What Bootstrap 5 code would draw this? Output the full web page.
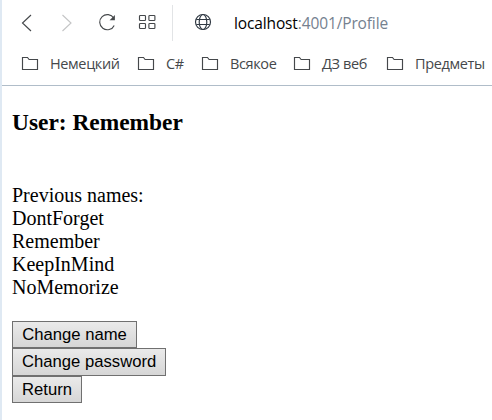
<!DOCTYPE html>
<html lang="ru">
<head>
<meta charset="utf-8">
<title>Profile</title>
<link href="https://cdn.jsdelivr.net/npm/bootstrap@5.3.0/dist/css/bootstrap.min.css" rel="stylesheet">
<style>
body{height:420px;overflow:hidden;border-left:2px solid #dfe9f3;background:#fff;color:#000;font-family:"Liberation Serif",serif;font-size:20px;line-height:23px}
svg{display:block;flex:none;overflow:visible!important;fill:none;stroke:#45484b;stroke-width:1.15}
.toolbar{height:45px;padding-left:18px;font-family:"Open Sans","Noto Sans",sans-serif}
.tool{width:40px;height:45px}
.tool-grid{width:22px}
.tool-off{stroke:#c4c5c6}
.divider{width:1px;height:36px;margin:5px 19px 0 10px;background:#e2e4e6}
.address{font-size:15.5px;line-height:22px;margin:12px 0 0 18px;white-space:nowrap;letter-spacing:-.13px}
.address span{color:#75818f}
.bookmarks{height:41px;padding-left:20px;border-bottom:1px solid #b0bdc9;font-family:"Open Sans","Noto Sans",sans-serif;font-size:14.5px;line-height:20px;color:#45484b}
.bookmark{flex:none;white-space:nowrap;padding-top:9px;gap:12px}
.bookmark svg{margin-top:2px}
.bookmark span{letter-spacing:-.37px}
.b1{width:116px}.b2{width:64px}.b3{width:92px}.b4{width:93px}
.page{padding:23px 10px 0}
.page h3{font-size:23.4px;line-height:27px;font-weight:700;margin:0 0 48px}
.names{margin-bottom:22px}
.action{display:block;height:27px;padding:0 9px;border:1px solid #707070;border-radius:0;background:linear-gradient(#eaeaea,#d6d6d6);color:#000;font-family:"Liberation Sans",Arial,sans-serif;font-size:16.67px;line-height:25px;white-space:nowrap}
.w1{width:125px}.w2{width:154px;height:28px;padding-bottom:2px}.w3{width:70px}
</style>
<script src="https://cdn.jsdelivr.net/npm/bootstrap@5.3.0/dist/js/bootstrap.bundle.min.js"></script>
</head>
<body>
<header>
<nav class="toolbar d-flex align-items-start">
<svg class="tool" viewBox="20 0 40 45"><path d="M31 15l-8.5 8 8.5 8"/></svg>
<svg class="tool tool-off" viewBox="60 0 40 45"><path d="M62.5 15l8.5 8-8.5 8"/></svg>
<svg class="tool" viewBox="100 0 40 45"><path d="M113.8 18.2A7.6 7.6 0 1 0 114.2 25.4"/><path d="M114.9 15v5.3h-5.3z" fill="#45484b" stroke="none"/></svg>
<svg class="tool tool-grid" viewBox="140 0 22 45"><rect x="139.5" y="15.5" width="6" height="5" rx=".8"/><rect x="148.9" y="15.5" width="6" height="5" rx=".8"/><rect x="139.5" y="23.5" width="6" height="5" rx=".8"/><rect x="148.9" y="23.5" width="6" height="5" rx=".8"/></svg>
<div class="divider"></div>
<svg width="24" height="45" viewBox="192 0 24 45"><g stroke="#303943"><circle cx="203" cy="22" r="7.5"/><ellipse cx="203" cy="22" rx="3.8" ry="7.5"/><path d="M196.3 19.5h13.4M196.3 24.5h13.4"/></g></svg>
<div class="address">localhost<span>:4001/Profile</span></div>
</nav>
<div class="bookmarks d-flex">
<div class="bookmark b1 d-flex"><svg width="16" height="16"><path d="M.5 13.5v-12h5l1.6 2h8.4v10z"/></svg><span>Немецкий</span></div>
<div class="bookmark b2 d-flex"><svg width="16" height="16"><path d="M.5 13.5v-12h5l1.6 2h8.4v10z"/></svg><span>C#</span></div>
<div class="bookmark b3 d-flex"><svg width="16" height="16"><path d="M.5 13.5v-12h5l1.6 2h8.4v10z"/></svg><span>Всякое</span></div>
<div class="bookmark b4 d-flex"><svg width="16" height="16"><path d="M.5 13.5v-12h5l1.6 2h8.4v10z"/></svg><span>ДЗ веб</span></div>
<div class="bookmark d-flex"><svg width="16" height="16"><path d="M.5 13.5v-12h5l1.6 2h8.4v10z"/></svg><span>Предметы</span></div>
</div>
</header>
<main class="page">
<h3>User: Remember</h3>
<div class="names">Previous names:<br>DontForget<br>Remember<br>KeepInMind<br>NoMemorize</div>
<button class="action w1">Change name</button>
<button class="action w2">Change password</button>
<button class="action w3">Return</button>
</main>
</body>
</html>
